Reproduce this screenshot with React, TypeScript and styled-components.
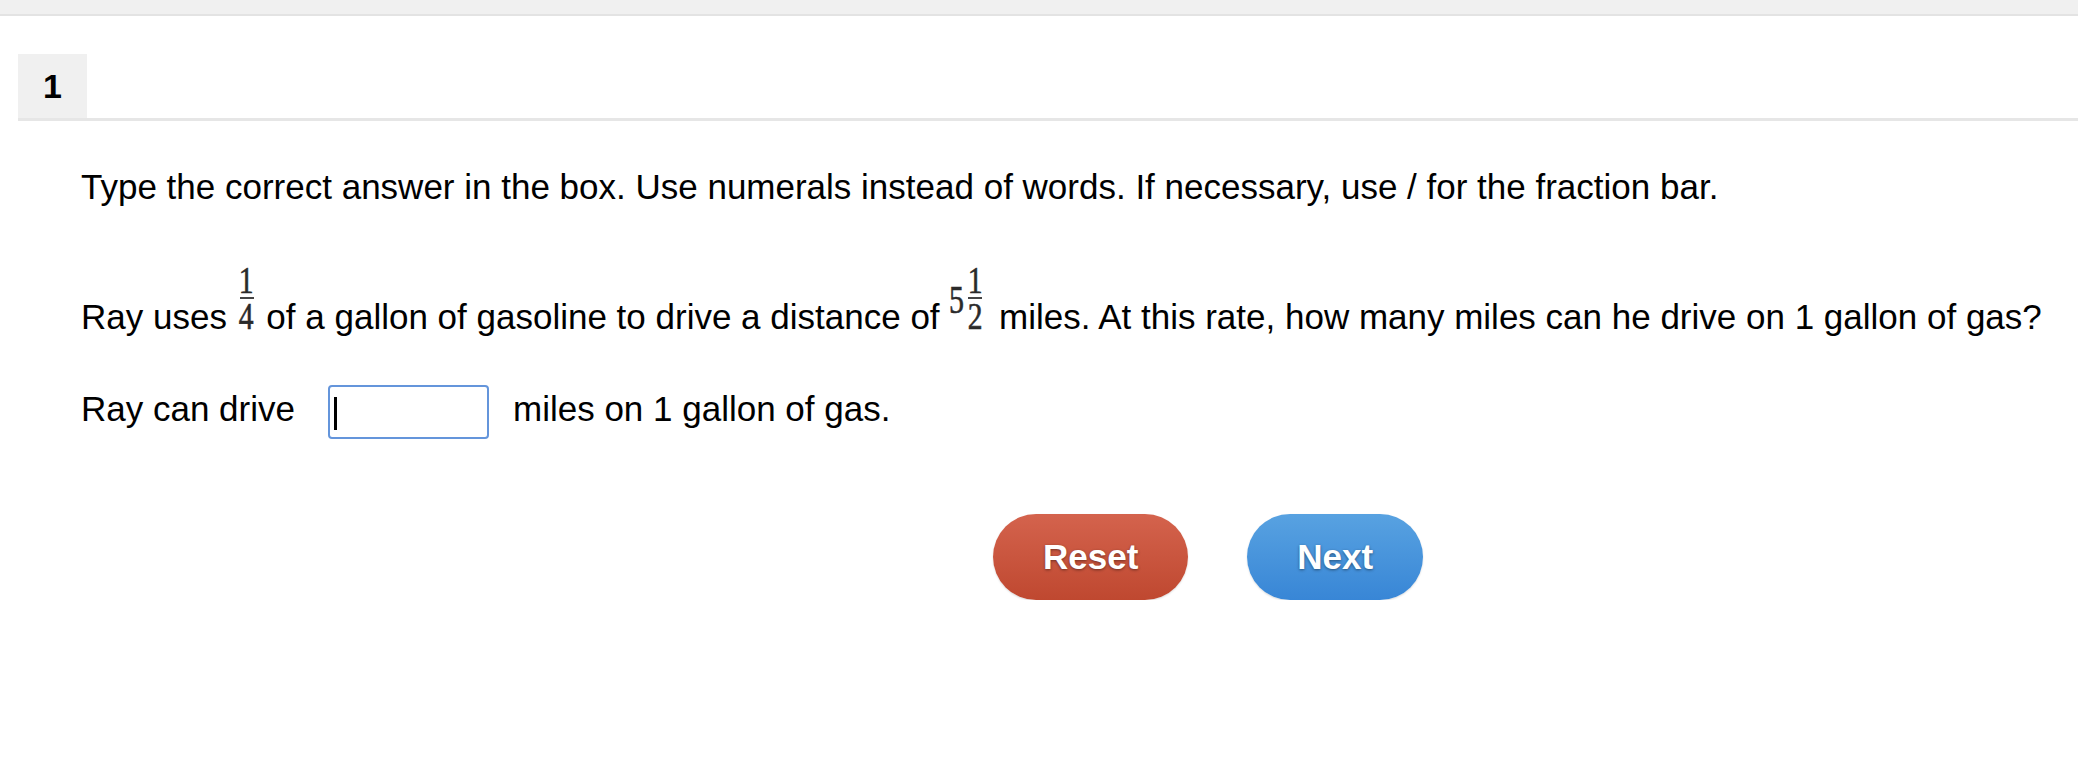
import React from 'react'
import styled, { createGlobalStyle } from 'styled-components'

const GlobalStyle = createGlobalStyle`
  html, body {
    margin: 0;
    padding: 0;
    background: #fff;
    font-family: "Liberation Sans", Arial, sans-serif;
    color: #000;
  }
`

const TopBar = styled.div`
  height: 14px;
  background: #f0f0f0;
  border-bottom: 2px solid #e3e3e3;
`

const TabRow = styled.div`
  display: flex;
  margin: 38px 0 0 18px;
  border-bottom: 3px solid #e6e6e6;
`

const Tab = styled.div`
  width: 69px;
  height: 64px;
  display: flex;
  align-items: center;
  justify-content: center;
  background: #f0f0f0;
  font-size: 34px;
  font-weight: bold;
`

const Content = styled.div`
  padding: 46px 0 0 81px;
  font-size: 35px;
  line-height: 40px;
`

const Para = styled.p<{ gap?: number }>`
  margin: ${({ gap }) => gap ?? 0}px 0 0 0;
  white-space: nowrap;
`

const Frac = styled.span<{ mixed?: boolean }>`
  display: inline-flex;
  flex-direction: column;
  align-items: center;
  width: 16px;
  margin: ${({ mixed }) => (mixed ? '0 6px 0 2px' : '0 2px')};
  vertical-align: 36px;
  color: #2a2a2a;
`

const Digit = styled.span`
  display: block;
  font-family: "Liberation Serif", "Times New Roman", serif;
  font-size: 37px;
  line-height: 25px;
  height: 25px;
  transform: scaleX(0.8);
  -webkit-text-stroke: 0.6px #2a2a2a;
`

const Bar = styled.span`
  display: block;
  width: 14px;
  height: 2px;
  margin: 4px 0 5px;
  background: #444;
`

const Whole = styled.span`
  display: inline-block;
  font-family: "Liberation Serif", "Times New Roman", serif;
  font-size: 40px;
  color: #2a2a2a;
  -webkit-text-stroke: 0.6px #2a2a2a;
  vertical-align: 16px;
  line-height: 28px;
  width: 16px;
  transform: scaleX(0.75);
  transform-origin: left center;
`

const AnswerBox = styled.span`
  position: relative;
  display: inline-block;
  vertical-align: middle;
  width: 161px;
  height: 54px;
  margin: 0 24px 0 33px;
`

const Input = styled.input`
  box-sizing: border-box;
  width: 100%;
  height: 100%;
  border: 2px solid #6495db;
  border-radius: 4px;
  outline: none;
  background: #fff;
  font: inherit;
  padding: 0 6px;
  caret-color: transparent;
`

const Caret = styled.span`
  position: absolute;
  left: 6px;
  top: 12px;
  width: 3px;
  height: 33px;
  background: #000;
`

const Buttons = styled.div`
  display: flex;
  gap: 59px;
  margin: 75px 0 0 912px;
`

const Pill = styled.button<{ tone: 'red' | 'blue' }>`
  height: 86px;
  padding: 0 50px;
  border: none;
  border-radius: 43px;
  font-family: "Liberation Sans", Arial, sans-serif;
  font-size: 35px;
  font-weight: bold;
  color: #fff;
  text-shadow: 0 1px 3px rgba(0, 0, 0, 0.45);
  box-shadow: 0 1px 2px rgba(0, 0, 0, 0.15);
  background: ${({ tone }) =>
    tone === 'red'
      ? 'linear-gradient(#d4634d, #bf4830)'
      : 'linear-gradient(#58a2e1, #3886d6)'};
  cursor: pointer;
`

const Fraction = ({ n, d, mixed }: { n: string; d: string; mixed?: boolean }) => (
  <Frac mixed={mixed}>
    <Digit>{n}</Digit>
    <Bar />
    <Digit>{d}</Digit>
  </Frac>
)

export default function App() {
  return (
    <>
      <GlobalStyle />
      <TopBar />
      <TabRow>
        <Tab>1</Tab>
      </TabRow>
      <Content>
        <Para>
          Type the correct answer in the box. Use numerals instead of words. If necessary, use / for the fraction bar.
        </Para>
        <Para gap={61}>
          Ray uses <Fraction n="1" d="4" /> of a gallon of gasoline to drive a distance of <Whole>5</Whole>
          <Fraction n="1" d="2" mixed /> miles. At this rate, how many miles can he drive on 1 gallon of gas?
        </Para>
        <Para gap={48}>
          Ray can drive
          <AnswerBox>
            <Input type="text" aria-label="answer" />
            <Caret />
          </AnswerBox>
          miles on 1 gallon of gas.
        </Para>
        <Buttons>
          <Pill tone="red">Reset</Pill>
          <Pill tone="blue">Next</Pill>
        </Buttons>
      </Content>
    </>
  )
}
